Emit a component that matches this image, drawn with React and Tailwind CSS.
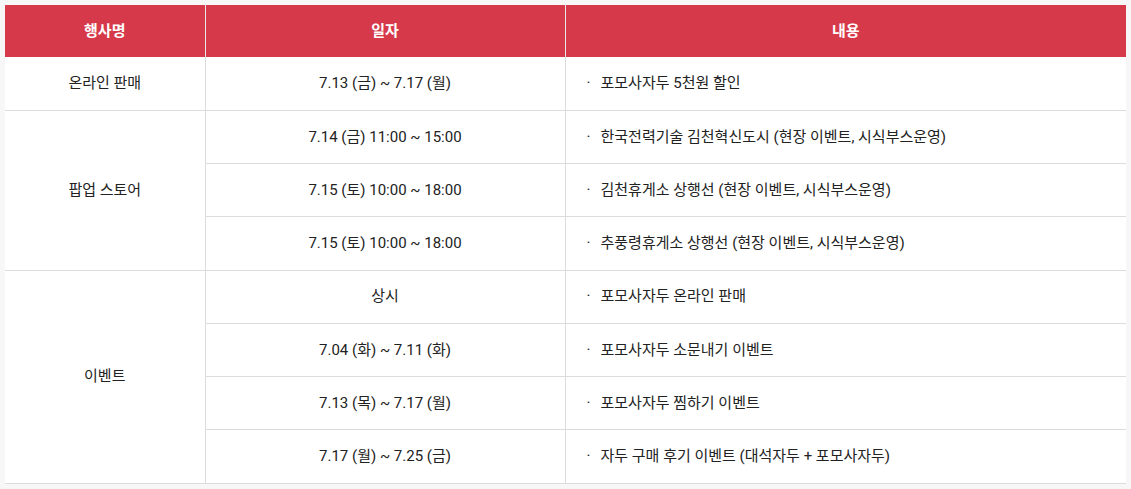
const rows = [
  { group: "온라인 판매", items: [["7.13 (금) ~ 7.17 (월)", "포모사자두 5천원 할인"]] },
  {
    group: "팝업 스토어",
    items: [
      ["7.14 (금) 11:00 ~ 15:00", "한국전력기술 김천혁신도시 (현장 이벤트, 시식부스운영)"],
      ["7.15 (토) 10:00 ~ 18:00", "김천휴게소 상행선 (현장 이벤트, 시식부스운영)"],
      ["7.15 (토) 10:00 ~ 18:00", "추풍령휴게소 상행선 (현장 이벤트, 시식부스운영)"],
    ],
  },
  {
    group: "이벤트",
    items: [
      ["상시", "포모사자두 온라인 판매"],
      ["7.04 (화) ~ 7.11 (화)", "포모사자두 소문내기 이벤트"],
      ["7.13 (목) ~ 7.17 (월)", "포모사자두 찜하기 이벤트"],
      ["7.17 (월) ~ 7.25 (금)", "자두 구매 후기 이벤트 (대석자두 + 포모사자두)"],
    ],
  },
];

export default function App() {
  return (
    <div
      className="min-h-screen bg-[#f7f7f7] p-[5px] text-[15px] text-[#222]"
      style={{ fontFamily: 'Roboto, "Noto Sans CJK KR", sans-serif' }}
    >
      <table className="w-[1121px] border-collapse bg-white table-fixed">
        <colgroup>
          <col className="w-[200px]" />
          <col className="w-[360px]" />
          <col />
        </colgroup>
        <thead>
          <tr className="bg-[#d63a4a] text-white h-[52px]">
            <th className="font-bold">행사명</th>
            <th className="font-bold border-l border-[#e8e8e8]">일자</th>
            <th className="font-bold border-l border-[#e8e8e8]">내용</th>
          </tr>
        </thead>
        <tbody>
          {rows.map((g) =>
            g.items.map((it, i) => (
              <tr key={g.group + i} className="h-[53.25px] border-b border-[#dcdcdc]">
                {i === 0 && (
                  <td rowSpan={g.items.length} className="text-center align-middle">
                    {g.group}
                  </td>
                )}
                <td className="text-center border-l border-[#dcdcdc]">{it[0]}</td>
                <td className="border-l border-[#dcdcdc] pl-[21px]">
                  <span className="inline-block w-[14px]">·</span>
                  {it[1]}
                </td>
              </tr>
            ))
          )}
        </tbody>
      </table>
    </div>
  );
}
